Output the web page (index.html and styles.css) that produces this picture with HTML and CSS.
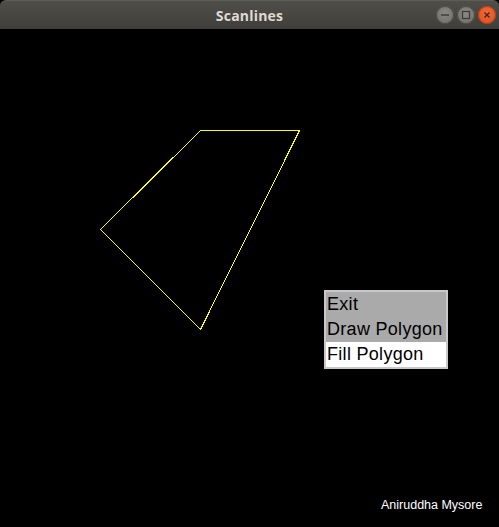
FILE: index.html
```html
<!DOCTYPE html>
<html>
<head>
<meta charset="utf-8">
<link rel="stylesheet" href="styles.css">
</head>
<body>
<div class="window">
  <div class="titlebar">
    <span class="title">Scanlines</span>
    <div class="controls">
      <span class="btn btn-min"><svg width="18" height="18" viewBox="0 0 18 18"><line x1="5" y1="9" x2="13" y2="9" stroke="#3a3935" stroke-width="1.4"/></svg></span>
      <span class="btn btn-max"><svg width="18" height="18" viewBox="0 0 18 18"><rect x="5.5" y="5.5" width="7" height="7" fill="none" stroke="#3a3935" stroke-width="1.2"/></svg></span>
      <span class="btn btn-close"><svg width="18" height="18" viewBox="0 0 18 18"><path d="M6.5 6.5L11.5 11.5M11.5 6.5L6.5 11.5" stroke="#3a2a20" stroke-width="1.4"/></svg></span>
    </div>
  </div>
  <div class="canvas">
    <svg class="drawing" width="499" height="498" viewBox="0 29 499 498">
      <polygon points="200.5,130.5 299.5,130.5 200.5,329.5 100.5,229.5" fill="none" stroke="#ffff00" stroke-width="1" shape-rendering="crispEdges"/>
    </svg>
    <div class="menu">
      <div class="item">Exit</div>
      <div class="item">Draw Polygon</div>
      <div class="item active">Fill Polygon</div>
    </div>
    <div class="credit">Aniruddha Mysore</div>
  </div>
</div>
</body>
</html>
```
FILE: styles.css
```css
html, body {
  margin: 0;
  padding: 0;
  background: #000;
  width: 499px;
  height: 527px;
  overflow: hidden;
}
.window {
  width: 499px;
  height: 527px;
  display: flex;
  flex-direction: column;
}
.titlebar {
  height: 29px;
  flex: 0 0 29px;
  background: linear-gradient(#504e49, #3f3e3a);
  border-radius: 6px 6px 0 0;
  display: flex;
  align-items: center;
  justify-content: center;
  position: relative;
  box-sizing: border-box;
  border-top: 1px solid #5e5c56;
}
.title {
  font-family: "Open Sans", "DejaVu Sans", sans-serif;
  font-weight: 700;
  font-size: 14px;
  color: #dfdbd2;
  letter-spacing: 0.2px;
}
.controls {
  position: absolute;
  right: 3px;
  top: 5px;
  display: flex;
  gap: 3px;
}
.btn {
  width: 18px;
  height: 18px;
  border-radius: 50%;
  display: block;
}
.btn svg { display: block; }
.btn-min, .btn-max {
  background: radial-gradient(circle at 50% 40%, #8a8984, #6b6a65);
  box-shadow: inset 0 0 0 1px #4a4944;
}
.btn-close {
  background: radial-gradient(circle at 50% 40%, #f26a3d, #df4a16);
  box-shadow: inset 0 0 0 1px #a8401c;
}
.canvas {
  flex: 1;
  position: relative;
  background: #000;
}
.drawing {
  display: block;
}
.menu {
  position: absolute;
  left: 324px;
  top: 261px;
  width: 120px;
  border: 2px solid #c8c8c8;
  background: #aaaaaa;
  font-family: "Liberation Sans", Arial, sans-serif;
  font-size: 18px;
  letter-spacing: 0.3px;
  color: #000;
}
.item {
  height: 25px;
  line-height: 25px;
  padding-left: 1px;
  white-space: nowrap;
  overflow: hidden;
}
.item.active {
  background: #ffffff;
}
.credit {
  position: absolute;
  left: 381px;
  top: 469px;
  font-family: "Liberation Sans", Arial, sans-serif;
  font-size: 12.5px;
  color: #ffffff;
}
```
